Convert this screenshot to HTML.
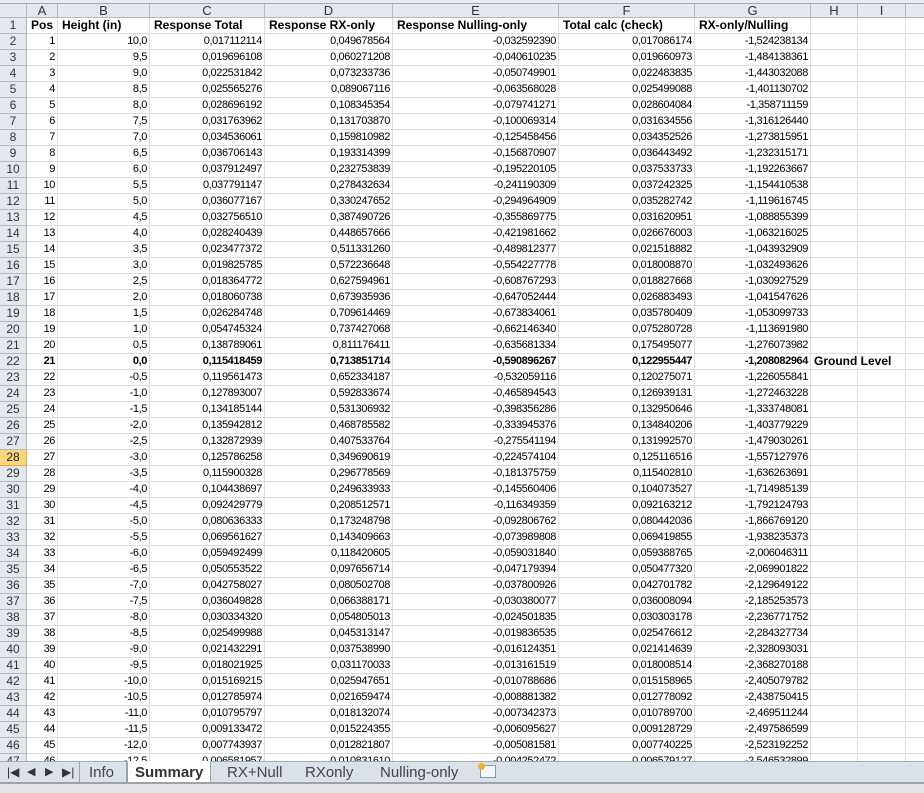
<!DOCTYPE html>
<html><head><meta charset="utf-8"><style>
*{box-sizing:border-box;margin:0;padding:0}
body{width:924px;height:793px;overflow:hidden;background:#fff;font-family:"Liberation Sans",sans-serif;font-size:11px;position:relative}
#top{position:absolute;left:0;top:0;width:924px;height:4px;background:#e8ebef;border-bottom:1px solid #a3aab3}
#grid{position:absolute;left:0;top:4px;width:924px;height:757px;overflow:hidden}
.r{display:flex;height:16px;line-height:15px;white-space:nowrap}
.r>div{flex:none;border-right:1px solid #dadcdd;border-bottom:1px solid #dadcdd;text-align:right;padding-right:2px;overflow:hidden;letter-spacing:-0.4px}
.r>div:nth-child(1){width:27px;background:#e4e8ee;border-color:#b1b9c4;text-align:center;padding:0;color:#333;letter-spacing:0;font-size:12px}
.r>div:nth-child(2){width:31px}.r>div:nth-child(3){width:92px}.r>div:nth-child(4){width:115px}
.r>div:nth-child(5){width:128px}.r>div:nth-child(6){width:166px}.r>div:nth-child(7){width:136px}
.r>div:nth-child(8){width:116px}.r>div:nth-child(9){width:47px}.r>div:nth-child(10){width:48px}.r>div:nth-child(11){width:40px}
.h{height:14px;line-height:13px}
.h>div{background:#e4e8ee;border-color:#b1b9c4 !important;text-align:center !important;padding:0 !important;color:#333;font-size:13px !important;letter-spacing:0 !important}
.b>div{font-weight:bold}
.b>div:nth-child(1){font-weight:normal}
.t>div{text-align:left;padding-left:4px;font-weight:bold;letter-spacing:0;font-size:12px}
.t>div:nth-child(1){font-weight:normal;padding:0}
.sel>div:nth-child(1){background:#f9d77e;border-color:#e3a83c;color:#222}
#tabs{position:absolute;left:0;top:761px;width:924px;height:22px;background:#dce1e8;border-top:1px solid #a3aab3}
#tabs span{position:absolute;top:1px;font-size:15px;color:#444;line-height:19px}
#line{position:absolute;left:0;top:782px;width:924px;height:2px;background:#9aa2ab}
#status{position:absolute;left:0;top:784px;width:924px;height:9px;background:#e4e6ea}
</style></head><body>
<div id="top"></div>
<div id="grid">
<div class="r h"><div></div><div>A</div><div>B</div><div>C</div><div>D</div><div>E</div><div>F</div><div>G</div><div>H</div><div>I</div><div></div></div>
<div class="r t"><div>1</div><div>Pos</div><div>Height (in)</div><div>Response Total</div><div>Response RX-only</div><div>Response Nulling-only</div><div>Total calc (check)</div><div>RX-only/Nulling</div><div></div><div></div><div></div></div>
<div class="r"><div>2</div><div>1</div><div>10,0</div><div>0,017112114</div><div>0,049678564</div><div>-0,032592390</div><div>0,017086174</div><div>-1,524238134</div><div></div><div></div><div></div></div>
<div class="r"><div>3</div><div>2</div><div>9,5</div><div>0,019696108</div><div>0,060271208</div><div>-0,040610235</div><div>0,019660973</div><div>-1,484138361</div><div></div><div></div><div></div></div>
<div class="r"><div>4</div><div>3</div><div>9,0</div><div>0,022531842</div><div>0,073233736</div><div>-0,050749901</div><div>0,022483835</div><div>-1,443032088</div><div></div><div></div><div></div></div>
<div class="r"><div>5</div><div>4</div><div>8,5</div><div>0,025565276</div><div>0,089067116</div><div>-0,063568028</div><div>0,025499088</div><div>-1,401130702</div><div></div><div></div><div></div></div>
<div class="r"><div>6</div><div>5</div><div>8,0</div><div>0,028696192</div><div>0,108345354</div><div>-0,079741271</div><div>0,028604084</div><div>-1,358711159</div><div></div><div></div><div></div></div>
<div class="r"><div>7</div><div>6</div><div>7,5</div><div>0,031763962</div><div>0,131703870</div><div>-0,100069314</div><div>0,031634556</div><div>-1,316126440</div><div></div><div></div><div></div></div>
<div class="r"><div>8</div><div>7</div><div>7,0</div><div>0,034536061</div><div>0,159810982</div><div>-0,125458456</div><div>0,034352526</div><div>-1,273815951</div><div></div><div></div><div></div></div>
<div class="r"><div>9</div><div>8</div><div>6,5</div><div>0,036706143</div><div>0,193314399</div><div>-0,156870907</div><div>0,036443492</div><div>-1,232315171</div><div></div><div></div><div></div></div>
<div class="r"><div>10</div><div>9</div><div>6,0</div><div>0,037912497</div><div>0,232753839</div><div>-0,195220105</div><div>0,037533733</div><div>-1,192263667</div><div></div><div></div><div></div></div>
<div class="r"><div>11</div><div>10</div><div>5,5</div><div>0,037791147</div><div>0,278432634</div><div>-0,241190309</div><div>0,037242325</div><div>-1,154410538</div><div></div><div></div><div></div></div>
<div class="r"><div>12</div><div>11</div><div>5,0</div><div>0,036077167</div><div>0,330247652</div><div>-0,294964909</div><div>0,035282742</div><div>-1,119616745</div><div></div><div></div><div></div></div>
<div class="r"><div>13</div><div>12</div><div>4,5</div><div>0,032756510</div><div>0,387490726</div><div>-0,355869775</div><div>0,031620951</div><div>-1,088855399</div><div></div><div></div><div></div></div>
<div class="r"><div>14</div><div>13</div><div>4,0</div><div>0,028240439</div><div>0,448657666</div><div>-0,421981662</div><div>0,026676003</div><div>-1,063216025</div><div></div><div></div><div></div></div>
<div class="r"><div>15</div><div>14</div><div>3,5</div><div>0,023477372</div><div>0,511331260</div><div>-0,489812377</div><div>0,021518882</div><div>-1,043932909</div><div></div><div></div><div></div></div>
<div class="r"><div>16</div><div>15</div><div>3,0</div><div>0,019825785</div><div>0,572236648</div><div>-0,554227778</div><div>0,018008870</div><div>-1,032493626</div><div></div><div></div><div></div></div>
<div class="r"><div>17</div><div>16</div><div>2,5</div><div>0,018364772</div><div>0,627594961</div><div>-0,608767293</div><div>0,018827668</div><div>-1,030927529</div><div></div><div></div><div></div></div>
<div class="r"><div>18</div><div>17</div><div>2,0</div><div>0,018060738</div><div>0,673935936</div><div>-0,647052444</div><div>0,026883493</div><div>-1,041547626</div><div></div><div></div><div></div></div>
<div class="r"><div>19</div><div>18</div><div>1,5</div><div>0,026284748</div><div>0,709614469</div><div>-0,673834061</div><div>0,035780409</div><div>-1,053099733</div><div></div><div></div><div></div></div>
<div class="r"><div>20</div><div>19</div><div>1,0</div><div>0,054745324</div><div>0,737427068</div><div>-0,662146340</div><div>0,075280728</div><div>-1,113691980</div><div></div><div></div><div></div></div>
<div class="r"><div>21</div><div>20</div><div>0,5</div><div>0,138789061</div><div>0,811176411</div><div>-0,635681334</div><div>0,175495077</div><div>-1,276073982</div><div></div><div></div><div></div></div>
<div class="r b"><div>22</div><div>21</div><div>0,0</div><div>0,115418459</div><div>0,713851714</div><div>-0,590896267</div><div>0,122955447</div><div>-1,208082964</div><div style="width:95px;text-align:left;padding-left:3px;letter-spacing:0;border-right:1px solid #dadcdd;font-size:12px">Ground Level</div><div style="width:40px"></div></div>
<div class="r"><div>23</div><div>22</div><div>-0,5</div><div>0,119561473</div><div>0,652334187</div><div>-0,532059116</div><div>0,120275071</div><div>-1,226055841</div><div></div><div></div><div></div></div>
<div class="r"><div>24</div><div>23</div><div>-1,0</div><div>0,127893007</div><div>0,592833674</div><div>-0,465894543</div><div>0,126939131</div><div>-1,272463228</div><div></div><div></div><div></div></div>
<div class="r"><div>25</div><div>24</div><div>-1,5</div><div>0,134185144</div><div>0,531306932</div><div>-0,398356286</div><div>0,132950646</div><div>-1,333748081</div><div></div><div></div><div></div></div>
<div class="r"><div>26</div><div>25</div><div>-2,0</div><div>0,135942812</div><div>0,468785582</div><div>-0,333945376</div><div>0,134840206</div><div>-1,403779229</div><div></div><div></div><div></div></div>
<div class="r"><div>27</div><div>26</div><div>-2,5</div><div>0,132872939</div><div>0,407533764</div><div>-0,275541194</div><div>0,131992570</div><div>-1,479030261</div><div></div><div></div><div></div></div>
<div class="r sel"><div>28</div><div>27</div><div>-3,0</div><div>0,125786258</div><div>0,349690619</div><div>-0,224574104</div><div>0,125116516</div><div>-1,557127976</div><div></div><div></div><div></div></div>
<div class="r"><div>29</div><div>28</div><div>-3,5</div><div>0,115900328</div><div>0,296778569</div><div>-0,181375759</div><div>0,115402810</div><div>-1,636263691</div><div></div><div></div><div></div></div>
<div class="r"><div>30</div><div>29</div><div>-4,0</div><div>0,104438697</div><div>0,249633933</div><div>-0,145560406</div><div>0,104073527</div><div>-1,714985139</div><div></div><div></div><div></div></div>
<div class="r"><div>31</div><div>30</div><div>-4,5</div><div>0,092429779</div><div>0,208512571</div><div>-0,116349359</div><div>0,092163212</div><div>-1,792124793</div><div></div><div></div><div></div></div>
<div class="r"><div>32</div><div>31</div><div>-5,0</div><div>0,080636333</div><div>0,173248798</div><div>-0,092806762</div><div>0,080442036</div><div>-1,866769120</div><div></div><div></div><div></div></div>
<div class="r"><div>33</div><div>32</div><div>-5,5</div><div>0,069561627</div><div>0,143409663</div><div>-0,073989808</div><div>0,069419855</div><div>-1,938235373</div><div></div><div></div><div></div></div>
<div class="r"><div>34</div><div>33</div><div>-6,0</div><div>0,059492499</div><div>0,118420605</div><div>-0,059031840</div><div>0,059388765</div><div>-2,006046311</div><div></div><div></div><div></div></div>
<div class="r"><div>35</div><div>34</div><div>-6,5</div><div>0,050553522</div><div>0,097656714</div><div>-0,047179394</div><div>0,050477320</div><div>-2,069901822</div><div></div><div></div><div></div></div>
<div class="r"><div>36</div><div>35</div><div>-7,0</div><div>0,042758027</div><div>0,080502708</div><div>-0,037800926</div><div>0,042701782</div><div>-2,129649122</div><div></div><div></div><div></div></div>
<div class="r"><div>37</div><div>36</div><div>-7,5</div><div>0,036049828</div><div>0,066388171</div><div>-0,030380077</div><div>0,036008094</div><div>-2,185253573</div><div></div><div></div><div></div></div>
<div class="r"><div>38</div><div>37</div><div>-8,0</div><div>0,030334320</div><div>0,054805013</div><div>-0,024501835</div><div>0,030303178</div><div>-2,236771752</div><div></div><div></div><div></div></div>
<div class="r"><div>39</div><div>38</div><div>-8,5</div><div>0,025499988</div><div>0,045313147</div><div>-0,019836535</div><div>0,025476612</div><div>-2,284327734</div><div></div><div></div><div></div></div>
<div class="r"><div>40</div><div>39</div><div>-9,0</div><div>0,021432291</div><div>0,037538990</div><div>-0,016124351</div><div>0,021414639</div><div>-2,328093031</div><div></div><div></div><div></div></div>
<div class="r"><div>41</div><div>40</div><div>-9,5</div><div>0,018021925</div><div>0,031170033</div><div>-0,013161519</div><div>0,018008514</div><div>-2,368270188</div><div></div><div></div><div></div></div>
<div class="r"><div>42</div><div>41</div><div>-10,0</div><div>0,015169215</div><div>0,025947651</div><div>-0,010788686</div><div>0,015158965</div><div>-2,405079782</div><div></div><div></div><div></div></div>
<div class="r"><div>43</div><div>42</div><div>-10,5</div><div>0,012785974</div><div>0,021659474</div><div>-0,008881382</div><div>0,012778092</div><div>-2,438750415</div><div></div><div></div><div></div></div>
<div class="r"><div>44</div><div>43</div><div>-11,0</div><div>0,010795797</div><div>0,018132074</div><div>-0,007342373</div><div>0,010789700</div><div>-2,469511244</div><div></div><div></div><div></div></div>
<div class="r"><div>45</div><div>44</div><div>-11,5</div><div>0,009133472</div><div>0,015224355</div><div>-0,006095627</div><div>0,009128729</div><div>-2,497586599</div><div></div><div></div><div></div></div>
<div class="r"><div>46</div><div>45</div><div>-12,0</div><div>0,007743937</div><div>0,012821807</div><div>-0,005081581</div><div>0,007740225</div><div>-2,523192252</div><div></div><div></div><div></div></div>
<div class="r"><div>47</div><div>46</div><div>-12,5</div><div>0,006581957</div><div>0,010831610</div><div>-0,004252472</div><div>0,006579127</div><div>-2,546532899</div><div></div><div></div><div></div></div>
</div>
<div id="tabs">
<span style="left:7px;font-size:12px;color:#333">|◀</span>
<span style="left:27px;font-size:11px;color:#333">◀</span>
<span style="left:45px;font-size:11px;color:#333">▶</span>
<span style="left:62px;font-size:12px;color:#333">▶|</span>
<div style="position:absolute;left:79px;top:0;width:48px;height:21px;border-right:1px solid #9aa2ab;border-left:1px solid #9aa2ab"></div>
<span style="left:89px">Info</span>
<div style="position:absolute;left:127px;top:-1px;width:84px;height:22px;background:#fff;border:1px solid #9aa2ab;border-top:none"></div>
<span style="left:135px;font-weight:bold;color:#333">Summary</span>
<span style="left:227px">RX+Null</span>
<span style="left:305px">RXonly</span>
<span style="left:380px">Nulling-only</span>
<div style="position:absolute;left:480px;top:3px;width:16px;height:13px;border:1px solid #8a9aab;background:#f4f6f9"></div>
<div style="position:absolute;left:478px;top:1px;width:7px;height:7px;background:#f0b030;border-radius:50%"></div>
</div>
<div id="line"></div>
<div id="status"></div>
</body></html>
